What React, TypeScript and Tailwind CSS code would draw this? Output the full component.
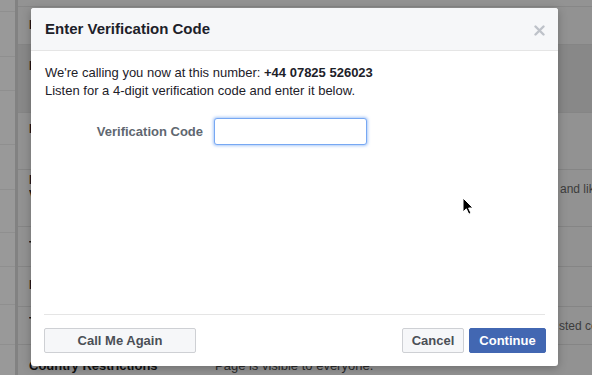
import React from "react";

const font = { fontFamily: '"Liberation Sans", Arial, Helvetica, sans-serif' };

function Row({
  h,
  dark,
  label,
  labelTop,
  right,
  rightTop,
}: {
  h: string;
  dark?: boolean;
  label?: React.ReactNode;
  labelTop?: string;
  right?: React.ReactNode;
  rightTop?: string;
}) {
  return (
    <div className={`${h} ${dark ? "bg-[#888888]" : ""} border-b border-[#858585] flex shrink-0`}>
      <div className="w-[11px] shrink-0" />
      <div className="w-[186px] shrink-0 flex">
        <div className={`w-[3px] overflow-hidden whitespace-nowrap ${labelTop ?? ""} text-[12px] font-bold text-[#151515] leading-[15px]`}>{label}</div>
      </div>
      <div className={`flex-1 ${rightTop ?? ""} text-[12px] text-[#3c3c3c] leading-[15px] whitespace-nowrap overflow-hidden`}>{right}</div>
    </div>
  );
}

export default function App() {
  return (
    <div className="relative w-[592px] h-[375px] overflow-hidden bg-[#929292]" style={font}>
      {/* background page */}
      <div className="flex h-full">
        <div className="w-[15px] shrink-0 bg-[#999999] flex flex-col">
          <div className="h-[12px] border-b border-[#8f8f8f]" />
          <div className="h-[45px] border-b border-[#8f8f8f]" />
          <div className="h-[34px] border-b border-[#8f8f8f]" />
          <div className="h-[54px] border-b border-[#8f8f8f]" />
          <div className="h-[45px] border-b border-[#8f8f8f]" />
          <div className="h-[43px] border-b border-[#8f8f8f]" />
          <div className="h-[34px] border-b border-[#8f8f8f]" />
          <div className="h-[38px] border-b border-[#8f8f8f]" />
          <div className="h-[40px] border-b border-[#8f8f8f]" />
        </div>
        <div className="w-[3px] shrink-0 bg-[#828282]" />
        <div className="flex-1 flex flex-col">
          <div className="h-[7px] shrink-0 bg-[#939393] border-b border-[#878787]" />
          <Row h="h-[38px]" label="Page Visibility" labelTop="pt-[11px]" />
          <Row h="h-[68px]" dark label="Posting Ability" labelTop="pt-[14px]" />
          <Row h="h-[57px]" label="Post Targeting" labelTop="pt-[9px]" />
          <Row
            h="h-[57px]"
            label={<>Messages<br />Visitor Posts</>}
            labelTop="pt-[3px]"
            rightTop="pt-[12px]"
            right={
              <>
                <span className="inline-block w-[345px]"> </span>
                and likes
              </>
            }
          />
          <Row h="h-[40px]" label="Tagging Ability" labelTop="pt-[12px]" />
          <Row h="h-[40px]" label="Notifications" labelTop="pt-[11px]" />
          <Row
            h="h-[38px]"
            label="Tagging Others"
            labelTop="pt-[8px]"
            rightTop="pt-[12px]"
            right={
              <>
                <span className="inline-block w-[344px]"> </span>
                sted co
              </>
            }
          />
          <div className="flex pt-[11px]">
            <div className="w-[11px] shrink-0" />
            <div className="w-[186px] shrink-0 text-[13px] font-bold text-[#111111]">Country Restrictions</div>
            <div className="text-[13px] text-[#2a2a2a]">Page is visible to everyone.</div>
          </div>
        </div>
      </div>

      {/* dialog */}
      <div className="absolute left-[31px] top-[8px] w-[527px] h-[358px] bg-white rounded-[3px] shadow-[0_2px_10px_rgba(0,0,0,0.25)] flex flex-col overflow-hidden">
        <div className="h-[43px] shrink-0 bg-[#f6f7f9] border-b border-[#e5e5e5] flex items-center justify-between pl-[14px] pr-[13px]">
          <div className="text-[15px] font-bold text-[#1d2129] pt-[1px]">Enter Verification Code</div>
          <svg width="11" height="11" viewBox="0 0 11 11" className="mt-[2px]">
            <path d="M1.5 1.5 L9.5 9.5 M9.5 1.5 L1.5 9.5" stroke="#bec2c9" strokeWidth="2.4" strokeLinecap="round" />
          </svg>
        </div>
        <div className="flex-1 pl-[14px] pt-[13px]">
          <div className="text-[13px] leading-[18px] text-[#1d2129]">
            <div>
              We're calling you now at this number: <span className="font-bold">+44 07825 526023</span>
            </div>
            <div>Listen for a 4-digit verification code and enter it below.</div>
          </div>
          <div className="flex items-center mt-[18px]">
            <div className="w-[158px] text-right text-[13px] font-bold text-[#606770]">Verification Code</div>
            <div className="ml-[11px] w-[153px] h-[27px] rounded-[3px] border border-[#77a8f3] shadow-[0_0_3px_1px_rgba(100,155,240,0.55)] bg-white" />
          </div>
        </div>
        <div className="mx-[13px] border-t border-[#e5e5e5] pt-[13px] pb-[13px] flex justify-between">
          <button className="w-[152px] h-[25px] rounded-[2px] border border-[#ced0d4] bg-[#f6f7f9] text-[13px] font-bold text-[#4b4f56]">
            Call Me Again
          </button>
          <div className="flex gap-[5px] mr-[-1px]">
            <button className="w-[62px] h-[25px] rounded-[2px] border border-[#ced0d4] bg-[#f6f7f9] text-[13px] font-bold text-[#4b4f56]">
              Cancel
            </button>
            <button className="w-[77px] h-[25px] rounded-[2px] border border-[#4267b2] bg-[#4267b2] text-[13px] font-bold text-white">
              Continue
            </button>
          </div>
        </div>
      </div>

      {/* mouse cursor */}
      <svg className="absolute left-[462px] top-[197px]" width="13" height="19" viewBox="0 0 13 19">
        <path d="M1 1 L1 15 L4.3 11.8 L6.8 17.2 L9 16.2 L6.6 11 L11 11 Z" fill="#000" stroke="#fff" strokeWidth="1" strokeLinejoin="round" />
      </svg>
    </div>
  );
}
